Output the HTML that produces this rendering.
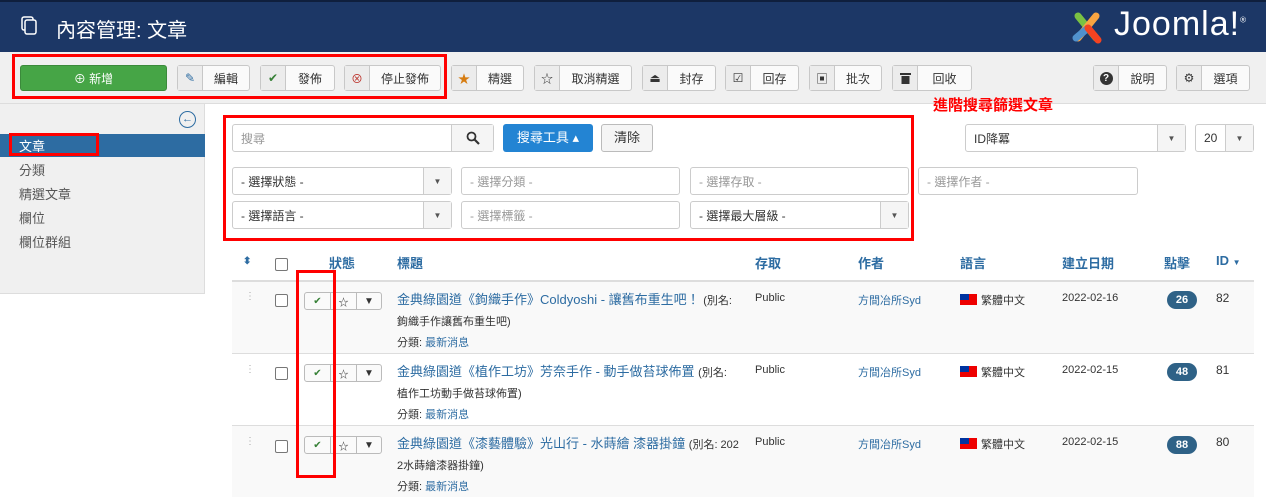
<!DOCTYPE html>
<html><head><meta charset="utf-8"><style>
*{box-sizing:border-box;margin:0;padding:0}
body{width:1266px;height:495px;overflow:hidden;position:relative;background:#fff;font-family:"Liberation Sans","Noto Sans CJK TC",sans-serif;font-size:12px;color:#333}
.a{position:absolute}
.hdr{left:0;top:0;width:1266px;height:52px;background:#1c3766;border-top:2px solid #0f1f3d}
.tb{left:0;top:52px;width:1266px;height:52px;background:#f0f0f0;border-bottom:1px solid #ddd}
.btn{position:absolute;top:65px;height:26px;border:1px solid #c8c8c8;border-radius:3px;background:#fafafa;display:flex;font-size:12px;color:#333}
.btn .i{width:25px;border-right:1px solid #c8c8c8;background:#ececec;display:flex;align-items:center;justify-content:center;font-size:12px;color:#333}
.btn .t{flex:1;display:flex;align-items:center;justify-content:center}
.red{position:absolute;border:3px solid #f00}
.side{left:0;top:104px;width:205px;height:190px;background:#f0f0f0;border-right:1px solid #ddd;border-bottom:1px solid #ddd}
.si{position:absolute;left:19px;font-size:13px;color:#555}
.inp{position:absolute;height:28px;border:1px solid #ccc;border-radius:3px;background:#fff;color:#999;font-size:12px;padding:0 8px;display:flex;align-items:center}
.sel{color:#333}
.sel .c{position:absolute;right:0;top:0;width:28px;height:100%;border-left:1px solid #ccc;background:#f5f5f5;display:flex;align-items:center;justify-content:center;font-size:8px;color:#555}
.th{position:absolute;top:253px;color:#2d6ca2;font-weight:bold;font-size:13px}
.row{position:absolute;left:232px;width:1022px;border-top:1px solid #ddd}
.cb{position:absolute;width:13px;height:13px;border:1.5px solid #777;border-radius:2px;background:#fff}
.ttl{position:absolute;left:397px;color:#2d6ca2;font-size:13px;line-height:20px;width:350px}
.sm{font-size:11px;color:#333}
.tgl{position:absolute;left:304px;width:78px;height:18px;border:1px solid #bbb;border-radius:3px;background:#fafafa;display:flex;font-size:10px}
.tgl span{display:flex;align-items:center;justify-content:center;border-right:1px solid #bbb}
.badge{position:absolute;left:1167px;width:30px;height:18px;border-radius:9px;background:#2f6287;color:#fff;font-weight:bold;font-size:11px;display:flex;align-items:center;justify-content:center}
.cell{position:absolute;font-size:11px;color:#333}
.flag{display:inline-block;width:17px;height:11px;background:#e00;position:relative;vertical-align:-1px;margin-right:4px}
.flag:before{content:"";position:absolute;left:0;top:0;width:9px;height:6px;background:#0033a0}
</style></head><body>
<div class="a hdr"></div>
<svg class="a" style="left:20px;top:16px" width="20" height="20" viewBox="0 0 20 20"><rect x="2" y="1" width="11" height="13" rx="2" fill="none" stroke="#fff" stroke-width="1.5"/><rect x="5" y="4" width="11" height="14" rx="2" fill="#1c3766" stroke="#fff" stroke-width="1.5"/></svg>
<div class="a" style="left:56px;top:14px;color:#fff;font-size:20px">內容管理: 文章</div>
<svg class="a" style="left:1068px;top:8px" width="40" height="40" viewBox="0 0 40 40"><path d="M10 8 L28 30" stroke="#7ac143" stroke-width="7" stroke-linecap="round"/><path d="M28 8 L10 30" stroke="#f9a541" stroke-width="7" stroke-linecap="round"/><path d="M8 30 L20 20" stroke="#5091cd" stroke-width="7" stroke-linecap="round"/><path d="M20 20 L30 32" stroke="#f44321" stroke-width="7" stroke-linecap="round"/></svg>
<div class="a" style="left:1114px;top:5px;color:#fff;font-size:34px;letter-spacing:1px">Joomla!<sup style="font-size:8px">®</sup></div>
<div class="a tb"></div>
<div class="btn" style="left:20px;width:147px;background:#46a546;border-color:#3b8a3b;color:#fff"><div class="t">⊕ 新增</div></div>
<div class="btn" style="left:177px;width:73px"><div class="i" style="color:#2d6ca2">✎</div><div class="t">編輯</div></div>
<div class="btn" style="left:260px;width:75px"><div class="i" style="color:#378137">✔</div><div class="t">發佈</div></div>
<div class="btn" style="left:344px;width:97px"><div class="i" style="color:#bd362f">⊗</div><div class="t">停止發佈</div></div>
<div class="btn" style="left:451px;width:73px"><div class="i" style="color:#d67c10">★</div><div class="t">精選</div></div>
<div class="btn" style="left:534px;width:98px"><div class="i">☆</div><div class="t">取消精選</div></div>
<div class="btn" style="left:642px;width:74px"><div class="i">⏏</div><div class="t">封存</div></div>
<div class="btn" style="left:725px;width:74px"><div class="i">☑</div><div class="t">回存</div></div>
<div class="btn" style="left:809px;width:73px"><div class="i">▣</div><div class="t">批次</div></div>
<div class="btn" style="left:892px;width:80px"><div class="i"><svg width="11" height="12" viewBox="0 0 11 12"><rect x="0" y="1" width="11" height="2" fill="#333"/><rect x="1.5" y="4" width="8" height="8" fill="#333"/></svg></div><div class="t">回收</div></div>
<div class="btn" style="left:1093px;width:74px"><div class="i"><span style="display:inline-block;width:13px;height:13px;border-radius:50%;background:#333;color:#fff;font-size:10px;font-weight:bold;text-align:center;line-height:13px">?</span></div><div class="t">說明</div></div>
<div class="btn" style="left:1176px;width:74px"><div class="i">⚙</div><div class="t">選項</div></div>
<div class="red" style="left:12px;top:54px;width:435px;height:45px"></div>
<div class="a" style="left:933px;top:94px;color:#f00;font-weight:bold;font-size:15px">進階搜尋篩選文章</div>

<div class="a side"></div>
<div class="a" style="left:179px;top:111px;width:17px;height:17px;border:1.5px solid #2d6ca2;border-radius:50%;color:#2d6ca2;font-size:11px;text-align:center;line-height:14px;font-weight:bold">←</div>
<div class="a" style="left:0;top:134px;width:205px;height:23px;background:#2d6ca2"></div>
<div class="si" style="top:136px;color:#fff">文章</div>
<div class="si" style="top:160px">分類</div>
<div class="si" style="top:184px">精選文章</div>
<div class="si" style="top:208px">欄位</div>
<div class="si" style="top:232px">欄位群組</div>
<div class="red" style="left:9px;top:133px;width:90px;height:23px"></div>

<div class="inp" style="left:232px;top:124px;width:262px">搜尋<div class="a" style="right:0;top:0;width:42px;height:26px;border-left:1px solid #ccc;background:#f5f5f5;display:flex;align-items:center;justify-content:center"><svg width="14" height="14" viewBox="0 0 14 14"><circle cx="5.5" cy="5.5" r="4" fill="none" stroke="#333" stroke-width="1.8"/><path d="M8.5 8.5 L13 13" stroke="#333" stroke-width="2.2"/></svg></div></div>
<div class="a" style="left:503px;top:124px;width:90px;height:28px;background:#2384d3;border-radius:3px;color:#fff;font-size:13px;text-align:center;line-height:28px">搜尋工具 ▴</div>
<div class="a" style="left:601px;top:124px;width:52px;height:28px;background:#f5f5f5;border:1px solid #bbb;border-radius:3px;font-size:13px;text-align:center;line-height:26px">清除</div>
<div class="inp sel" style="left:965px;top:124px;width:221px">ID降冪<div class="c">▼</div></div>
<div class="inp sel" style="left:1195px;top:124px;width:59px">20<div class="c">▼</div></div>

<div class="inp sel" style="left:232px;top:167px;width:220px">- 選擇狀態 -<div class="c">▼</div></div>
<div class="inp" style="left:461px;top:167px;width:219px">- 選擇分類 -</div>
<div class="inp" style="left:690px;top:167px;width:219px">- 選擇存取 -</div>
<div class="inp" style="left:918px;top:167px;width:220px">- 選擇作者 -</div>
<div class="inp sel" style="left:232px;top:201px;width:220px">- 選擇語言 -<div class="c">▼</div></div>
<div class="inp" style="left:461px;top:201px;width:219px">- 選擇標籤 -</div>
<div class="inp sel" style="left:690px;top:201px;width:219px">- 選擇最大層級 -<div class="c">▼</div></div>
<div class="red" style="left:223px;top:115px;width:691px;height:126px"></div>

<div class="th" style="left:243px;font-size:10px;top:256px">⬍</div>
<div class="cb" style="left:275px;top:258px"></div>
<div class="th" style="left:329px">狀態</div>
<div class="th" style="left:397px">標題</div>
<div class="th" style="left:755px">存取</div>
<div class="th" style="left:858px">作者</div>
<div class="th" style="left:960px">語言</div>
<div class="th" style="left:1062px">建立日期</div>
<div class="th" style="left:1164px">點擊</div>
<div class="th" style="left:1216px">ID <span style="font-size:8px">▼</span></div>

<div class="row" style="top:280px;height:73px;background:#f9f9f9;border-top:2px solid #ddd"></div>
<div class="row" style="top:353px;height:72px;background:#fff"></div>
<div class="row" style="top:425px;height:72px;background:#f9f9f9"></div>

<!-- row 1 -->
<div class="a" style="left:245px;top:291px;color:#aaa;font-size:10px">⋮</div>
<div class="cb" style="left:275px;top:294px"></div>
<div class="tgl" style="top:292px"><span style="width:26px;color:#378137">✔</span><span style="width:26px">☆</span><span style="width:24px;border:0">▼</span></div>
<div class="ttl" style="top:290px">金典綠園道《鉤織手作》Coldyoshi - 讓舊布重生吧！ <span class="sm">(別名:</span><br><span class="sm">鉤織手作讓舊布重生吧)</span><br><span class="sm">分類: <span style="color:#2d6ca2">最新消息</span></span></div>
<div class="cell" style="left:755px;top:292px">Public</div>
<div class="cell" style="left:858px;top:292px;color:#2d6ca2">方間冶所Syd</div>
<div class="cell" style="left:960px;top:292px"><span class="flag"></span>繁體中文</div>
<div class="cell" style="left:1062px;top:292px">2022-02-16</div>
<div class="badge" style="top:291px">26</div>
<div class="cell" style="left:1216px;top:291px;font-size:12px">82</div>

<!-- row 2 -->
<div class="a" style="left:245px;top:364px;color:#aaa;font-size:10px">⋮</div>
<div class="cb" style="left:275px;top:367px"></div>
<div class="tgl" style="top:364px"><span style="width:26px;color:#378137">✔</span><span style="width:26px">☆</span><span style="width:24px;border:0">▼</span></div>
<div class="ttl" style="top:362px">金典綠園道《植作工坊》芳奈手作 - 動手做苔球佈置 <span class="sm">(別名:</span><br><span class="sm">植作工坊動手做苔球佈置)</span><br><span class="sm">分類: <span style="color:#2d6ca2">最新消息</span></span></div>
<div class="cell" style="left:755px;top:364px">Public</div>
<div class="cell" style="left:858px;top:364px;color:#2d6ca2">方間冶所Syd</div>
<div class="cell" style="left:960px;top:364px"><span class="flag"></span>繁體中文</div>
<div class="cell" style="left:1062px;top:364px">2022-02-15</div>
<div class="badge" style="top:363px">48</div>
<div class="cell" style="left:1216px;top:363px;font-size:12px">81</div>

<!-- row 3 -->
<div class="a" style="left:245px;top:436px;color:#aaa;font-size:10px">⋮</div>
<div class="cb" style="left:275px;top:440px"></div>
<div class="tgl" style="top:436px"><span style="width:26px;color:#378137">✔</span><span style="width:26px">☆</span><span style="width:24px;border:0">▼</span></div>
<div class="ttl" style="top:434px">金典綠園道《漆藝體驗》光山行 - 水蒔繪 漆器掛鐘 <span class="sm">(別名: 202</span><br><span class="sm">2水蒔繪漆器掛鐘)</span><br><span class="sm">分類: <span style="color:#2d6ca2">最新消息</span></span></div>
<div class="cell" style="left:755px;top:436px">Public</div>
<div class="cell" style="left:858px;top:436px;color:#2d6ca2">方間冶所Syd</div>
<div class="cell" style="left:960px;top:436px"><span class="flag"></span>繁體中文</div>
<div class="cell" style="left:1062px;top:436px">2022-02-15</div>
<div class="badge" style="top:436px">88</div>
<div class="cell" style="left:1216px;top:435px;font-size:12px">80</div>

<div class="red" style="left:296px;top:270px;width:40px;height:208px"></div>
</body></html>
